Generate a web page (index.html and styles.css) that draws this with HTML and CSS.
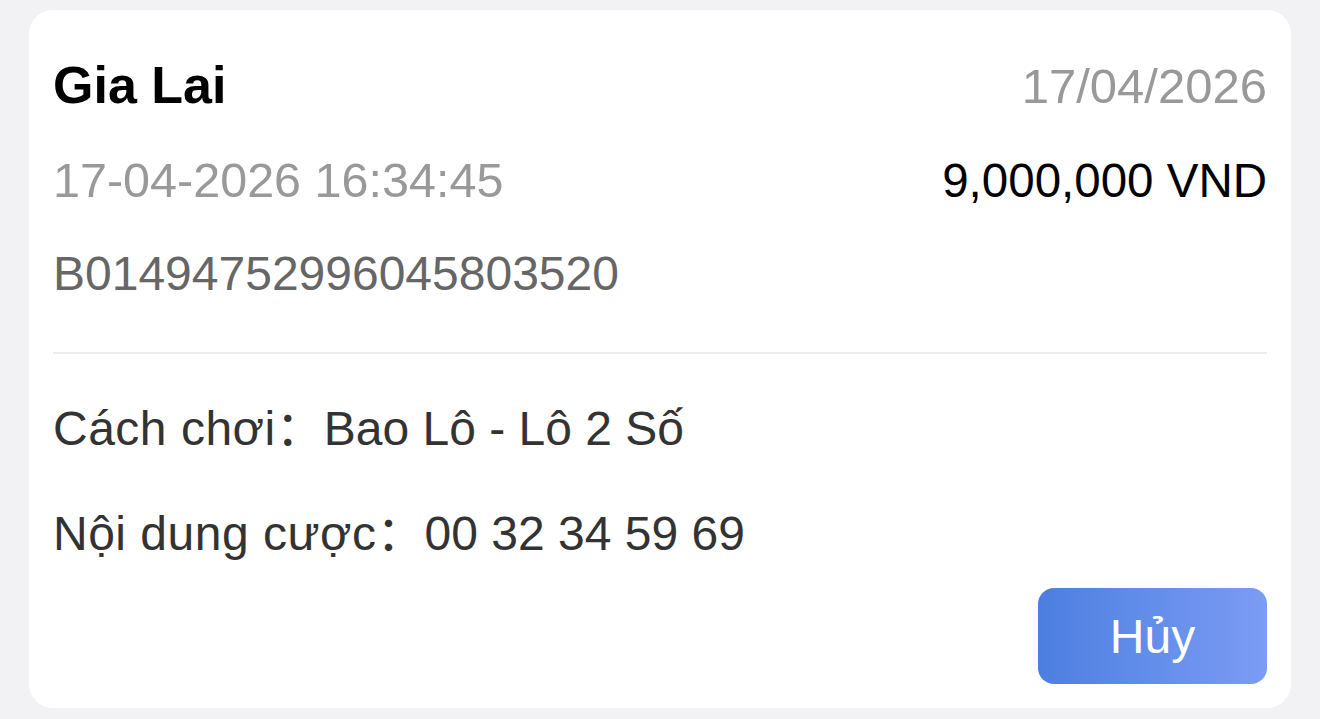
FILE: index.html
```html
<!DOCTYPE html>
<html lang="vi">
<head>
<meta charset="utf-8">
<title>Bet</title>
<link rel="stylesheet" href="styles.css">
</head>
<body>
<div class="page">
  <div class="card">
    <div class="row head">
      <div class="title">Gia Lai</div>
      <div class="date">17/04/2026</div>
    </div>
    <div class="row sub">
      <div class="time">17-04-2026 16:34:45</div>
      <div class="amount">9,000,000 VND</div>
    </div>
    <div class="code">B01494752996045803520</div>
    <div class="divider"></div>
    <div class="info first"><span class="label">Cách chơi</span><span class="colon">：</span><span class="value">Bao Lô - Lô 2 Số</span></div>
    <div class="info second"><span class="label">Nội dung cược</span><span class="colon">：</span><span class="value">00 32 34 59 69</span></div>
    <div class="actions">
      <button class="cancel">Hủy</button>
    </div>
  </div>
</div>
</body>
</html>
```
FILE: styles.css
```css
* { box-sizing: border-box; }
html, body { margin: 0; padding: 0; }
body {
  background: #f2f2f5;
  font-family: "Liberation Sans", Arial, "Noto Sans CJK SC", sans-serif;
  width: 1320px;
  height: 719px;
  overflow: hidden;
}
.page {
  padding: 10px 29px 11px 29px;
}
.card {
  background: #ffffff;
  border-radius: 24px;
  height: 698px;
  padding: 45px 24px 24px 24px;
  display: flex;
  flex-direction: column;
}
.row {
  display: flex;
  justify-content: space-between;
  align-items: baseline;
}
.title {
  font-size: 52px;
  font-weight: 700;
  line-height: 60px;
  color: #000;
}
.date {
  font-size: 49px;
  line-height: 56px;
  color: #999999;
}
.sub {
  margin-top: 37px;
  font-size: 48px;
  line-height: 56px;
}
.time { color: #999999; font-size: 48.5px; }
.amount { color: #000; font-size: 47.5px; }
.code {
  margin-top: 37px;
  font-size: 48px;
  line-height: 56px;
  color: #666666;
}
.divider {
  margin-top: 50px;
  height: 2px;
  background: #ececec;
}
.info {
  font-size: 48px;
  line-height: 56px;
  color: #333333;
  display: flex;
  align-items: baseline;
}
.info.first { margin-top: 47px; }
.info.second { margin-top: 49px; }
.label { letter-spacing: 0.5px; }
.colon {
  font-family: "Noto Sans CJK SC", sans-serif;
  width: 48px;
  line-height: 40px;
  display: inline-block;
}
.actions {
  margin-top: auto;
  display: flex;
  justify-content: flex-end;
}
.cancel {
  width: 229px;
  height: 96px;
  border: none;
  border-radius: 16px;
  background: linear-gradient(90deg, #4c7fe1 0%, #7b9cf4 100%);
  color: #ffffff;
  font-family: "Liberation Sans", Arial, sans-serif;
  font-size: 48px;
  padding: 0;
}
```
